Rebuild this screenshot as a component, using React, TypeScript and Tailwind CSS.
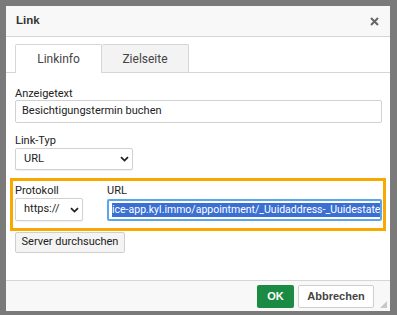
import React from "react";

const font = { fontFamily: 'Roboto, "Liberation Sans", Arial, sans-serif' };
const bold = { fontFamily: '"Liberation Sans", Arial, sans-serif' };

function Chevron() {
  return (
    <svg width="9" height="6" viewBox="0 0 9 6" className="shrink-0">
      <path d="M1 1.2 L4.5 4.6 L8 1.2" fill="none" stroke="#222" strokeWidth="1.8" />
    </svg>
  );
}

function Select({ value, className }: { value: string; className: string }) {
  return (
    <div
      className={`flex items-center justify-between rounded-[2px] border border-[#d1d1d1] bg-white pl-[8px] pr-[3px] text-[11px] text-[#222] shadow-[0_1px_1px_rgba(0,0,0,0.06)] ${className}`}
    >
      <span>{value}</span>
      <Chevron />
    </div>
  );
}

export default function App() {
  return (
    <div className="relative h-[315px] w-[397px] overflow-hidden bg-[#7a7a7a]" style={font}>
      <div className="ml-[6px] mt-[6px] flex h-[305px] w-[384px] flex-col bg-white">
        {/* Header */}
        <div className="flex h-[31px] shrink-0 items-center justify-between border-b border-[#d6d6d6] bg-[#f8f8f8] pl-[10px] pr-[11px]">
          <span className="text-[11.5px] font-bold text-[#333]" style={bold}>
            Link
          </span>
          <svg width="9" height="9" viewBox="0 0 9 9">
            <path d="M1 1 L8 8 M8 1 L1 8" stroke="#666" strokeWidth="2" />
          </svg>
        </div>

        {/* Tabs */}
        <div className="flex h-[36px] shrink-0 items-end border-b border-[#d6d6d6] pl-[9px]">
          <div className="-mb-px flex h-[29px] w-[87px] items-center justify-center rounded-t-[2px] border border-b-0 border-[#d6d6d6] bg-white text-[12px] text-[#444]">
            Linkinfo
          </div>
          <div className="flex h-[28px] w-[87px] items-center justify-center rounded-t-[2px] border border-b-0 border-l-0 border-[#d6d6d6] bg-[#f3f3f3] text-[12px] text-[#444]">
            Zielseite
          </div>
        </div>

        {/* Body */}
        <div className="flex flex-1 flex-col px-[9px] pt-[14px]">
          <label className="text-[11px] leading-[13px] text-[#222]">Anzeigetext</label>
          <div className="flex h-[23px] w-[367px] items-center rounded-[2px] border border-[#d1d1d1] bg-white px-[6px] text-[11px] text-[#222]">
            Besichtigungstermin buchen
          </div>

          <label className="mt-[11px] text-[11px] leading-[13px] text-[#222]">Link-Typ</label>
          <Select value="URL" className="mt-px h-[22px] w-[118px]" />

          <div className="-mx-[5px] mt-[8px] flex h-[53px] gap-[24px] border-[3px] border-[#f9a800] pl-[2px] pt-[3px]">
            <div className="flex flex-col">
              <label className="text-[11px] leading-[13px] text-[#222]">Protokoll</label>
              <Select value="https://" className="mt-px h-[23px] w-[68px]" />
            </div>
            <div className="flex flex-col">
              <label className="text-[11px] leading-[13px] text-[#222]">URL</label>
              <div className="mt-[2px] flex h-[22px] w-[275px] items-center overflow-hidden rounded-[2px] border-2 border-[#5aa5ee] bg-white pl-[3px]">
                <span className="whitespace-nowrap bg-[#3b6fd3] text-[10.5px] leading-[14px] text-white">
                  ice-app.kyl.immo/appointment/_Uuidaddress-_Uuidestate
                </span>
              </div>
            </div>
          </div>

          <div className="mt-[1px] flex h-[21px] w-[110px] items-center justify-center rounded-[2px] border border-[#cfcfcf] bg-[#f4f4f4] text-[11px] text-[#222]">
            Server durchsuchen
          </div>
        </div>

        {/* Footer */}
        <div className="relative flex h-[31px] shrink-0 items-center justify-end gap-[4px] border-t border-[#d6d6d6] bg-[#f8f8f8] pr-[16px]">
          <div
            className="flex h-[23px] w-[37px] items-center justify-center rounded-[2px] bg-[#1b8a42] text-[11px] font-bold text-white"
            style={bold}
          >
            OK
          </div>
          <div
            className="flex h-[23px] w-[76px] items-center justify-center rounded-[2px] border border-[#cfcfcf] bg-white text-[11px] font-bold text-[#444]"
            style={bold}
          >
            Abbrechen
          </div>
          <svg width="7" height="7" viewBox="0 0 7 7" className="absolute bottom-[3px] right-[3px]">
            <path d="M7 0 L7 7 L0 7 Z" fill="#c8c8c8" />
          </svg>
        </div>
      </div>
    </div>
  );
}
